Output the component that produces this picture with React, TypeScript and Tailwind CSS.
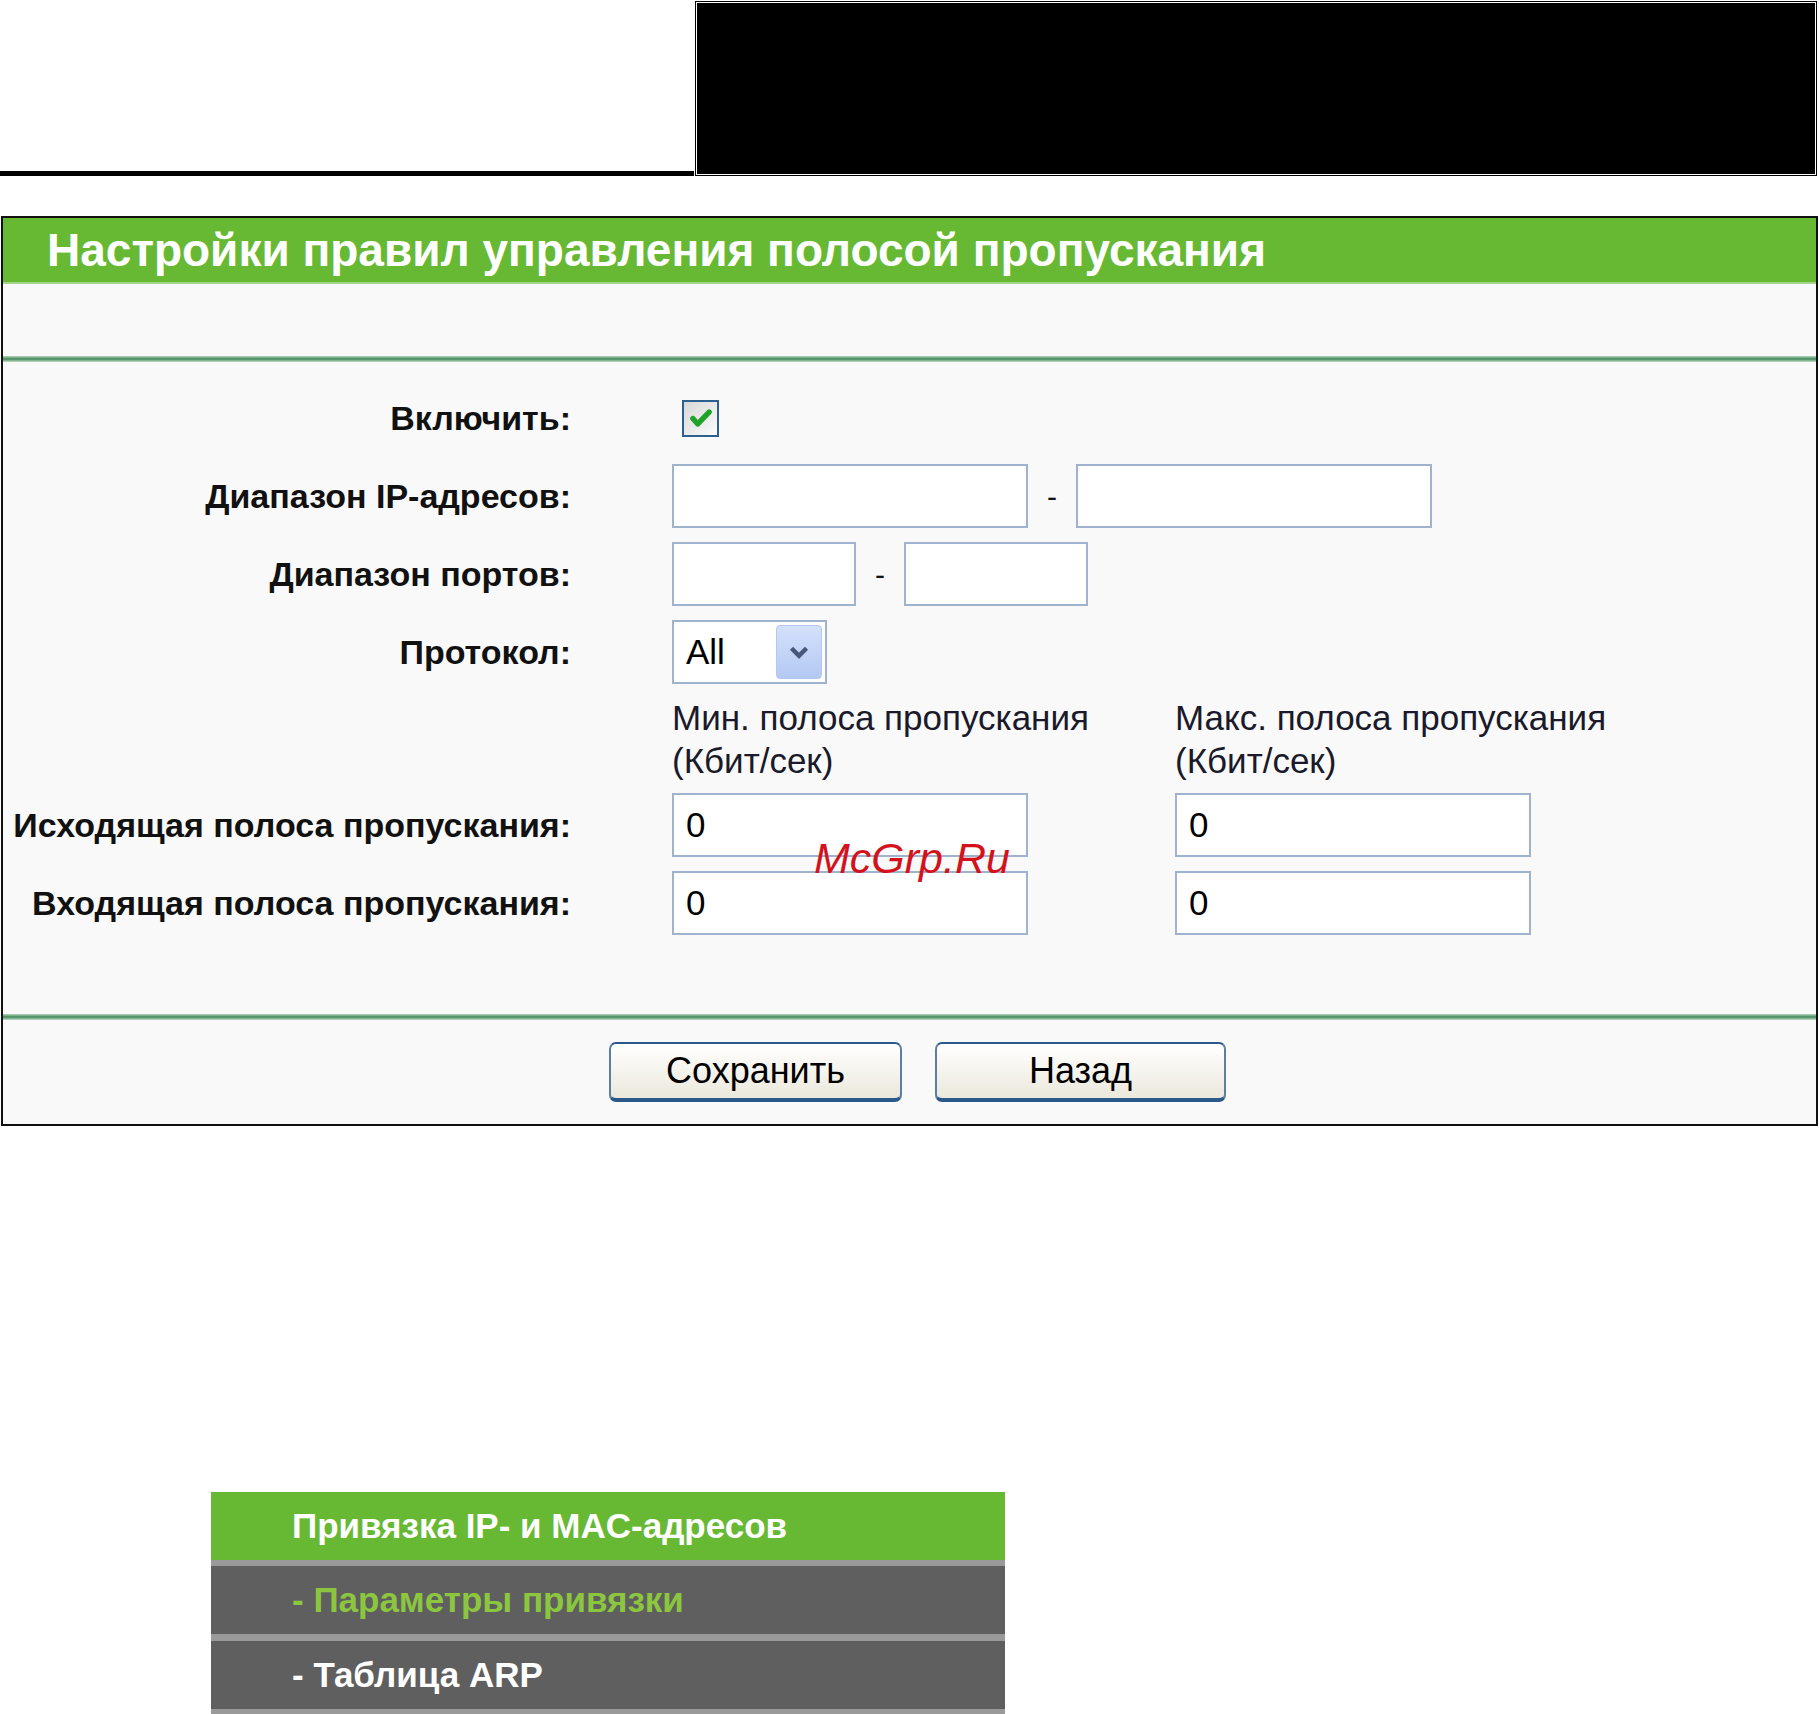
function Field({ className, value }: { className: string; value?: string }) {
  return (
    <input
      readOnly
      defaultValue={value}
      className={`${className} h-[64px] border-2 border-[#9fb3cf] bg-white pl-[12px] text-[35px] text-black outline-none font-['Liberation_Sans',Arial,sans-serif]`}
    />
  );
}

function Label({ children }: { children: React.ReactNode }) {
  return (
    <div className="text-right font-bold text-[34px] text-[#111]">{children}</div>
  );
}

function GreenRule() {
  return (
    <div className="h-[6px] bg-gradient-to-b from-[#b9d8c0] via-[#3f8a5a] to-[#c6e0cb]" />
  );
}

export default function App() {
  return (
    <div className="w-[1819px] h-[1714px] bg-white overflow-hidden font-['Liberation_Sans',Arial,sans-serif]">
      {/* top header block */}
      <div className="flex h-[176px]">
        <div className="w-[694px] h-full border-b-[5px] border-black bg-white" />
        <div className="w-[1123px] h-full pt-[1px] pl-[1px]">
          <div className="h-full border border-black">
            <div className="h-full border border-white bg-black" />
          </div>
        </div>
      </div>

      {/* rules panel */}
      <div className="mt-[40px] ml-[1px] w-[1817px] h-[910px] border-2 border-[#111] bg-[#f9f9f9] flex flex-col">
        <div className="h-[66px] bg-[#67b934] border-b-2 border-[#a6d48a] flex items-center pl-[44px]">
          <h1 className="text-[46px] font-bold text-white leading-none">
            Настройки правил управления полосой пропускания
          </h1>
        </div>
        <div className="h-[72px]" />
        <GreenRule />

        {/* form */}
        <div className="pt-[17px] grid grid-cols-[568px_1fr] gap-x-[101px] items-center">
          <div className="h-[78px] flex items-center justify-end">
            <Label>Включить:</Label>
          </div>
          <div className="h-[78px] flex items-center pl-[10px]">
            <div className="w-[37px] h-[37px] border-2 border-[#2d5f91] bg-gradient-to-br from-[#d8d8d8] to-[#fbfbfb] flex items-center justify-center">
              <svg viewBox="0 0 24 24" className="w-[26px] h-[26px]">
                <path d="M4.5 12.5l4.5 5L19.5 6.5" fill="none" stroke="#21a32b" strokeWidth="5" strokeLinecap="round" strokeLinejoin="round" />
              </svg>
            </div>
          </div>

          <div className="h-[78px] flex items-center justify-end">
            <Label>Диапазон IP-адресов:</Label>
          </div>
          <div className="h-[78px] flex items-center">
            <Field className="w-[356px]" />
            <span className="w-[48px] text-center text-[30px] text-[#111]">-</span>
            <Field className="w-[356px]" />
          </div>

          <div className="h-[78px] flex items-center justify-end">
            <Label>Диапазон портов:</Label>
          </div>
          <div className="h-[78px] flex items-center">
            <Field className="w-[184px]" />
            <span className="w-[48px] text-center text-[30px] text-[#111]">-</span>
            <Field className="w-[184px]" />
          </div>

          <div className="h-[78px] flex items-center justify-end">
            <Label>Протокол:</Label>
          </div>
          <div className="h-[78px] flex items-center">
            <div className="w-[155px] h-[64px] border-2 border-[#9fb3cf] bg-white flex items-center justify-between pl-[12px] pr-[3px]">
              <span className="text-[35px] text-black">All</span>
              <div className="w-[46px] h-[54px] rounded-[4px] border border-[#b4c7ee] bg-gradient-to-b from-[#d4e1fb] to-[#b3c8f3] flex items-center justify-center">
                <svg viewBox="0 0 16 16" className="w-[24px] h-[24px]">
                  <path d="M3 5.5l5 5 5-5" fill="none" stroke="#48587a" strokeWidth="3" />
                </svg>
              </div>
            </div>
          </div>

          <div />
          <div className="pt-[5px] pb-[4px] grid grid-cols-[503px_1fr] text-[35px] leading-[43px] text-[#1a1a2a]">
            <div>
              Мин. полоса пропускания
              <br />
              (Кбит/сек)
            </div>
            <div>
              Макс. полоса пропускания
              <br />
              (Кбит/сек)
            </div>
          </div>

          <div className="h-[78px] flex items-center justify-end">
            <Label>Исходящая полоса пропускания:</Label>
          </div>
          <div className="h-[78px] relative grid grid-cols-[503px_1fr] items-center">
            <Field className="w-[356px]" value="0" />
            <Field className="w-[356px]" value="0" />
            <span className="absolute left-[142px] top-[51px] text-[43px] italic text-[#d3121b] leading-none">
              McGrp.Ru
            </span>
          </div>

          <div className="h-[78px] flex items-center justify-end">
            <Label>Входящая полоса пропускания:</Label>
          </div>
          <div className="h-[78px] grid grid-cols-[503px_1fr] items-center">
            <Field className="w-[356px]" value="0" />
            <Field className="w-[356px]" value="0" />
          </div>
        </div>

        <div className="h-[72px]" />
        <GreenRule />

        <div className="pt-[22px] flex justify-center gap-[33px] pl-[16px]">
          <button className="w-[293px] h-[60px] rounded-[7px] border-2 border-b-[4px] border-[#2b5a8a] border-x-[#5b7ea6] bg-gradient-to-b from-white to-[#ebe8dc] text-[36px] text-black">
            Сохранить
          </button>
          <button className="w-[291px] h-[60px] rounded-[7px] border-2 border-b-[4px] border-[#2b5a8a] border-x-[#5b7ea6] bg-gradient-to-b from-white to-[#ebe8dc] text-[36px] text-black">
            Назад
          </button>
        </div>
      </div>

      {/* side menu fragment */}
      <div className="mt-[366px] ml-[211px] w-[794px] font-bold text-[35px]">
        <div className="h-[68px] bg-[#67b934] text-white flex items-center pl-[81px]">
          Привязка IP- и MAC-адресов
        </div>
        <div className="h-[6px] bg-[#9a9a9a]" />
        <div className="h-[68px] bg-[#5f5f5f] text-[#8cc63f] flex items-center pl-[81px]">
          - Параметры привязки
        </div>
        <div className="h-[7px] bg-[#9a9a9a]" />
        <div className="h-[68px] bg-[#5f5f5f] text-white flex items-center pl-[81px]">
          - Таблица ARP
        </div>
        <div className="h-[6px] bg-[#9a9a9a]" />
      </div>
    </div>
  );
}
